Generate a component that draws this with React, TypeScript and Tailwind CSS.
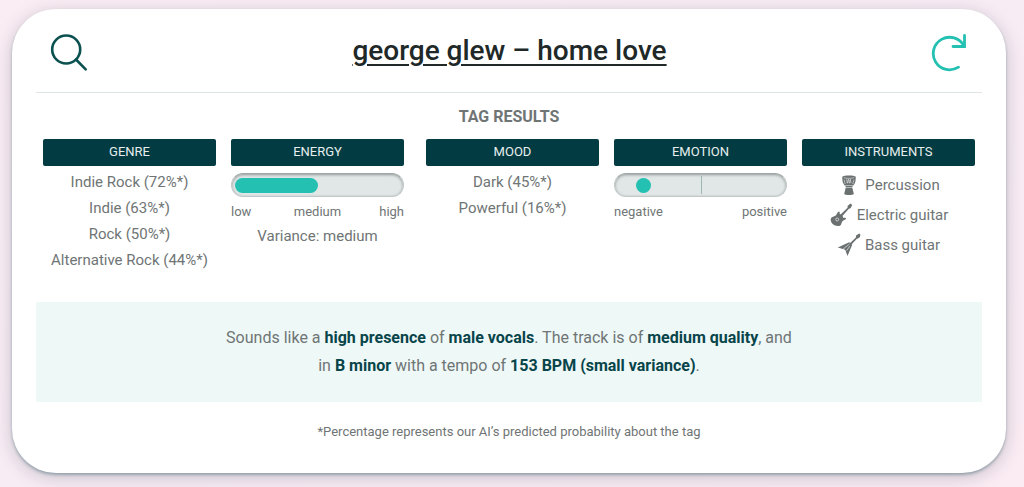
import React from "react";

const genres = [
  "Indie Rock (72%*)",
  "Indie (63%*)",
  "Rock (50%*)",
  "Alternative Rock (44%*)",
];

const moods = ["Dark (45%*)", "Powerful (16%*)"];

const SearchIcon = () => (
  <svg
    viewBox="0 0 38 38"
    className="size-[38px]"
    fill="none"
    stroke="#0b5150"
    strokeWidth="2.6"
    strokeLinecap="round"
  >
    <circle cx="16.2" cy="15.500" r="14" />
    <path d="M26 25.500 35.700 35.300" />
  </svg>
);

const ReloadIcon = () => (
  <svg
    viewBox="0 0 36 38"
    className="h-[38px] w-9"
    fill="none"
    stroke="#24c0b1"
    strokeWidth="2.8"
    strokeLinecap="round"
  >
    <path d="M27.500 33.200A16.300 16.300 0 1 1 33 12" />
    <path d="M22 12.500H33.500V1.500" strokeLinejoin="miter" />
  </svg>
);

const DrumIcon = () => (
  <svg viewBox="0 0 24 24" className="size-6" fill="#6b7071">
    <path d="M5.200 3.800C7 1.900 17 1.900 18.800 3.800L18.500 8c-.2 1.800-1.300 3.200-2.200 4.400H7.700C6.800 11.200 5.700 9.800 5.500 8z" />
    <path d="M8.400 13h7.200l-.3 1.500H8.700zM8.600 15.100h6.800l1.400 6c-1.300 1.300-8.300 1.300-9.600 0z" />
    <path
      d="M6.800 4.600c2 1 8.400 1 10.400 0M7 6.500l1.200 4.500M9.500 6.200l.9 4 1-4 1 4 1-4 .6 4M17 6.500l-1.200 4.500"
      fill="none"
      stroke="#fff"
      strokeWidth=".5"
    />
  </svg>
);

const ElectricGuitarIcon = () => (
  <svg viewBox="0 0 24 24" className="size-6" fill="#6b7071">
    <path d="M2.300 14.700c1.400-1.500 3.400-1 4.700-2.500 1.100-1.300 1.500-3.300 3-3.600 1-.1.700 1.300.7 2.300l1.700.8 1.500 1.700.4 1.500c1.100 0 2.900-.3 2.700.7-.3 1.500-2.700 1.600-3.600 2.700-1.200 1.500-.7 3.700-2.500 4.400-2.500.8-5.500-.2-7.500-2-1.700-1.700-2.300-4.500-1.100-6z" />
    <path d="M10.300 12.700 18.600 4.800l-.1-1.700L21.500.5l1.700 1.600-1.700 3.100-1.600.5-7.900 8.700z" />
    <circle cx="8.200" cy="16.500" r="1.500" fill="none" stroke="#fff" strokeWidth=".6" />
  </svg>
);

const BassGuitarIcon = () => (
  <svg viewBox="0 0 24 24" className="size-6" fill="#6b7071">
    <path d="M.8 14.600 12.200 9.200l3 2.600-4.700 11.200-2.300-6.200z" />
    <path d="M11.600 11.500 18.900 4.600l.2-2L22.200.5l1.200.9-.4 2.600-2 1.600-1.100.1-7.500 8z" />
    <path d="M6 16.200 12.600 11M9.700 17.600l3.100-4.600" fill="none" stroke="#fff" strokeWidth=".6" />
  </svg>
);

const instruments = [
  { name: "Percussion", icon: <DrumIcon /> },
  { name: "Electric guitar", icon: <ElectricGuitarIcon /> },
  { name: "Bass guitar", icon: <BassGuitarIcon /> },
];

const Column: React.FC<{ title: string; children: React.ReactNode }> = ({
  title,
  children,
}) => (
  <section className="min-w-0">
    <h3 className="rounded-xs bg-[#023b41] pb-px text-center text-[13px] leading-[26px] text-[#e6eeee]">
      {title}
    </h3>
    {children}
  </section>
);

const Track: React.FC<{
  label: string;
  value: number;
  children: React.ReactNode;
}> = ({ label, value, children }) => (
  <div
    role="meter"
    aria-label={label}
    aria-valuemin={0}
    aria-valuemax={100}
    aria-valuenow={value}
    className="relative mt-[7px] flex h-6 items-center rounded-full border border-[#c2c8c8] border-t-[#9fa6a6] bg-[#e1e7e7] px-[3px] shadow-[inset_0_1px_3px_rgba(0,0,0,0.35)]"
  >
    {children}
  </div>
);

const TagList: React.FC<{ items: string[] }> = ({ items }) => (
  <ul className="mt-[3px] text-center text-[15px] leading-[26px]">
    {items.map((item) => (
      <li key={item}>{item}</li>
    ))}
  </ul>
);

export default function App() {
  return (
    <div className="min-h-screen bg-linear-to-br from-[#fbedf4] via-[#f8ecf4] to-[#fbecf4] pt-[9px] pr-[18px] pb-[14px] pl-3 font-['Roboto',sans-serif] text-[#6f7575]">
      <main className="rounded-[44px] bg-white px-6 pb-[31px] shadow-[0_2px_3px_rgba(2,59,65,0.3),0_4px_18px_rgba(20,40,60,0.22)]">
        <header className="flex h-[84px] items-center justify-between border-b border-[#dfe5e6] pt-1 pr-[15px] pl-[14px]">
          <button type="button" aria-label="Search" className="cursor-pointer">
            <SearchIcon />
          </button>
          <h1 className="pb-1 text-[28px] leading-9 font-medium">
            <a
              href="#track"
              className="text-[#202828] underline decoration-2 underline-offset-4"
            >
              george glew – home love
            </a>
          </h1>
          <button type="button" aria-label="Reload" className="cursor-pointer">
            <ReloadIcon />
          </button>
        </header>

        <h2 className="mt-3 text-center text-base leading-6 font-bold">
          TAG RESULTS
        </h2>

        <div className="mt-[10px] flex min-h-[163px] gap-[22px] px-[7px]">
          <div className="grid flex-[2_1_15px] grid-cols-2 gap-[15px]">
            <Column title="GENRE">
              <TagList items={genres} />
            </Column>
            <Column title="ENERGY">
              <Track label="Energy" value={50}>
                <div className="h-[15px] w-1/2 rounded-full bg-[#24c0b1]" />
              </Track>
              <div className="mt-[5px] grid grid-cols-3 text-[13px] leading-5">
                <span>low</span>
                <span className="text-center">medium</span>
                <span className="text-right">high</span>
              </div>
              <p className="mt-px text-center text-[15px] leading-[26px]">
                Variance: medium
              </p>
            </Column>
          </div>
          <div className="grid flex-[3_1_30px] grid-cols-3 gap-[15px]">
            <Column title="MOOD">
              <TagList items={moods} />
            </Column>
            <Column title="EMOTION">
              <Track label="Emotion" value={17}>
                <div className="absolute inset-y-[2px] left-1/2 w-px bg-[#9fb6b6]" />
                <div className="ml-[18px] size-[15px] rounded-full bg-[#24c0b1]" />
              </Track>
              <div className="mt-[5px] flex justify-between text-[13px] leading-5">
                <span>negative</span>
                <span>positive</span>
              </div>
            </Column>
            <Column title="INSTRUMENTS">
              <ul className="mt-1 text-[15px] leading-[30px]">
                {instruments.map(({ name, icon }) => (
                  <li
                    key={name}
                    className="flex items-center justify-center gap-1"
                  >
                    {icon}
                    {name}
                  </li>
                ))}
              </ul>
            </Column>
          </div>
        </div>

        <p className="bg-[#eef8f7] px-6 py-[22px] text-center text-base leading-7 [&_strong]:font-bold [&_strong]:text-[#08454a]">
          Sounds like a <strong>high presence</strong> of{" "}
          <strong>male vocals</strong>. The track is of{" "}
          <strong>medium quality</strong>, and
          <br />
          in <strong>B minor</strong> with a tempo of{" "}
          <strong>153 BPM (small variance)</strong>.
        </p>

        <p className="mt-5 text-center text-[13px] leading-5">
          *Percentage represents our AI’s predicted probability about the tag
        </p>
      </main>
    </div>
  );
}
